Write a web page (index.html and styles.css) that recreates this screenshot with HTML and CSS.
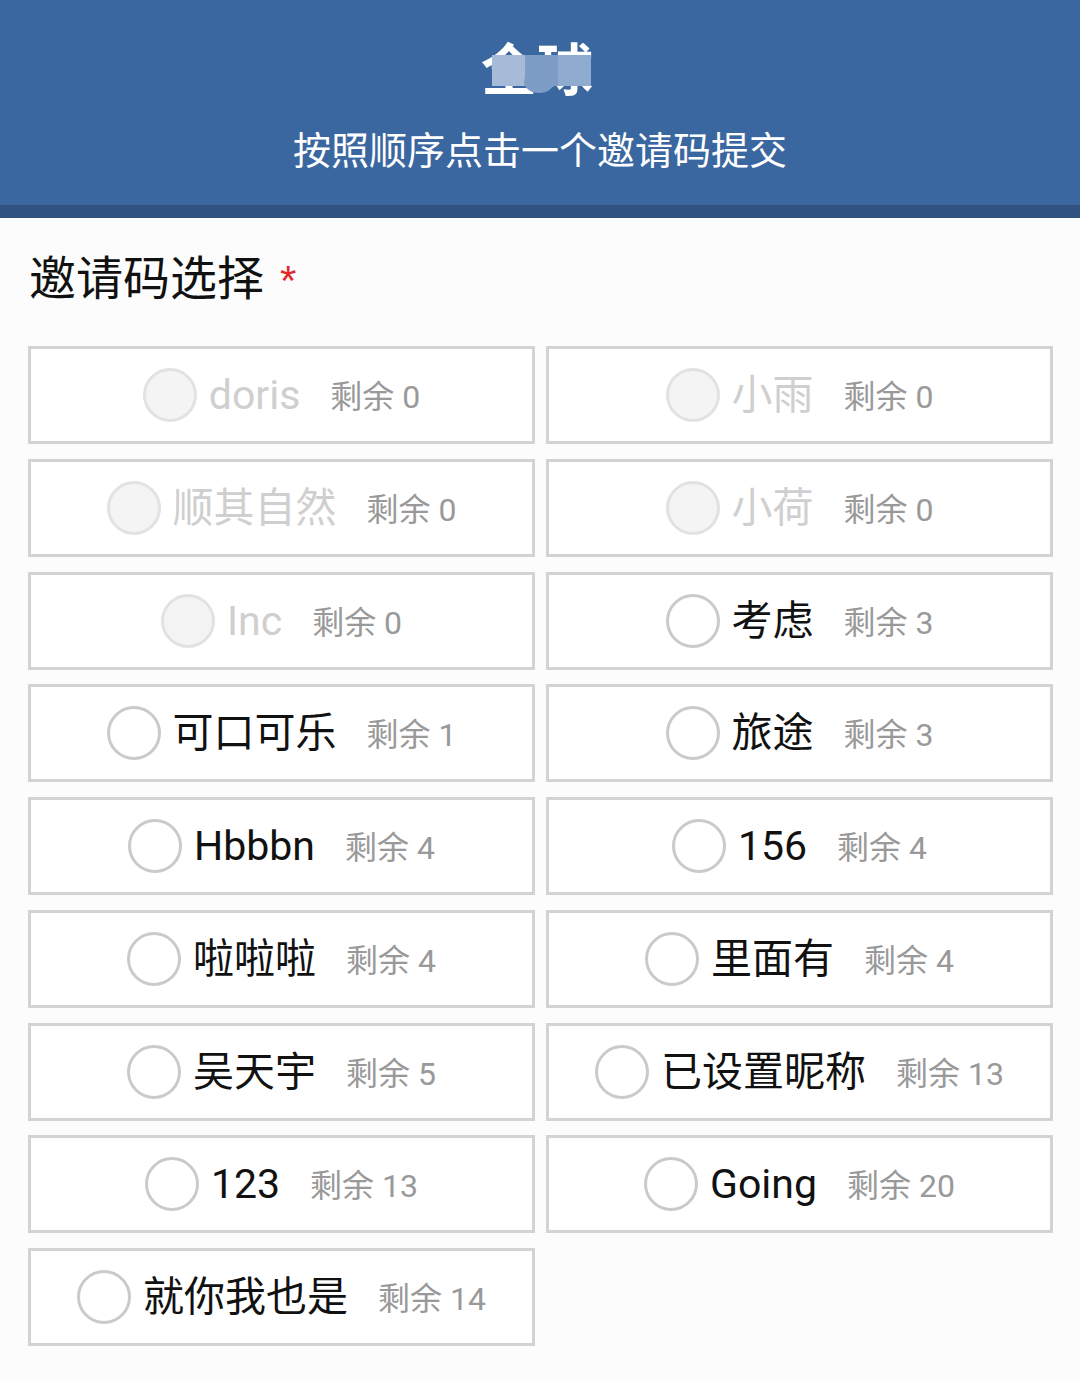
FILE: index.html
```html
<!DOCTYPE html>
<html lang="zh-CN">
<head>
<meta charset="utf-8">
<title>邀请码选择</title>
<link rel="stylesheet" href="styles.css">
</head>
<body>
<header class="header">
  <h1 class="title">全球<span class="mask"><span class="mask-a"></span><span class="mask-b"></span><span class="mask-c"></span><span class="mask-blob"></span></span></h1>
  <p class="subtitle">按照顺序点击一个邀请码提交</p>
</header>
<main class="form">
  <div class="label">邀请码选择<span class="req">*</span></div>
  <div class="grid">
    <label class="opt disabled"><span class="radio"></span><span class="name">doris</span><span class="left">剩余 0</span></label>
    <label class="opt disabled"><span class="radio"></span><span class="name">小雨</span><span class="left">剩余 0</span></label>
    <label class="opt disabled"><span class="radio"></span><span class="name">顺其自然</span><span class="left">剩余 0</span></label>
    <label class="opt disabled"><span class="radio"></span><span class="name">小荷</span><span class="left">剩余 0</span></label>
    <label class="opt disabled"><span class="radio"></span><span class="name">Inc</span><span class="left">剩余 0</span></label>
    <label class="opt"><span class="radio"></span><span class="name">考虑</span><span class="left">剩余 3</span></label>
    <label class="opt"><span class="radio"></span><span class="name">可口可乐</span><span class="left">剩余 1</span></label>
    <label class="opt"><span class="radio"></span><span class="name">旅途</span><span class="left">剩余 3</span></label>
    <label class="opt"><span class="radio"></span><span class="name">Hbbbn</span><span class="left">剩余 4</span></label>
    <label class="opt"><span class="radio"></span><span class="name">156</span><span class="left">剩余 4</span></label>
    <label class="opt"><span class="radio"></span><span class="name">啦啦啦</span><span class="left">剩余 4</span></label>
    <label class="opt"><span class="radio"></span><span class="name">里面有</span><span class="left">剩余 4</span></label>
    <label class="opt"><span class="radio"></span><span class="name">吴天宇</span><span class="left">剩余 5</span></label>
    <label class="opt"><span class="radio"></span><span class="name">已设置昵称</span><span class="left">剩余 13</span></label>
    <label class="opt"><span class="radio"></span><span class="name">123</span><span class="left">剩余 13</span></label>
    <label class="opt"><span class="radio"></span><span class="name">Going</span><span class="left">剩余 20</span></label>
    <label class="opt"><span class="radio"></span><span class="name">就你我也是</span><span class="left">剩余 14</span></label>
  </div>
</main>
</body>
</html>
```

FILE: styles.css
```css
* { box-sizing: border-box; }
html, body { margin: 0; padding: 0; }
body {
  background: #fcfcfc;
  font-family: Roboto, "Noto Sans CJK SC", sans-serif;
  color: #111;
  width: 1080px;
}
.header {
  background: #3b67a0;
  border-bottom: 13px solid #2f5283;
  text-align: center;
  color: #fff;
  padding: 34px 0 33px;
}
.title {
  margin: 0;
  font-size: 56px;
  line-height: 64px;
  font-weight: 700;
  font-family: "Noto Sans CJK SC", sans-serif;
  position: relative;
  display: inline-block;
  left: -3px;
}
.mask {
  position: absolute;
  left: 11px;
  top: 21px;
  width: 99px;
  height: 31px;
  display: flex;
}
.mask-a { flex: 33; background: #a7bbd8; }
.mask-b { flex: 33; background: #7d9cc6; }
.mask-c { flex: 33; background: #8fabd0; }
.mask-blob {
  position: absolute;
  left: 32px;
  top: 16px;
  width: 30px;
  height: 22px;
  border-radius: 50%;
  background: #7d9cc6;
}
.subtitle {
  margin: 26px 0 0;
  font-size: 38px;
  line-height: 48px;
  font-family: "Noto Sans CJK SC", sans-serif;
}
.form {
  padding: 27px 27px 0 28px;
}
.label {
  font-size: 47px;
  line-height: 60px;
  font-family: "Noto Sans CJK SC", sans-serif;
  color: #111;
  padding-left: 1px;
}
.req {
  color: #e02a2a;
  margin-left: 16px;
  font-family: "Liberation Sans", sans-serif;
  font-size: 42px;
}
.grid {
  margin-top: 35px;
  display: grid;
  grid-template-columns: 1fr 1fr;
  column-gap: 11px;
  row-gap: 14.75px;
}
.opt {
  height: 98px;
  border: 3px solid #d3d3d3;
  background: #fff;
  display: flex;
  align-items: center;
  justify-content: center;
}
.radio {
  width: 54px;
  height: 54px;
  border-radius: 50%;
  border: 3px solid #cacaca;
  background: #fff;
  flex: none;
  margin-right: 12px;
}
.name {
  font-size: 41px;
  line-height: 50px;
  color: #111;
  margin-right: 30px;
}
.left {
  font-size: 32px;
  line-height: 40px;
  color: #999;
  margin-top: 4px;
}
.disabled .radio {
  background: #f4f4f4;
  border-color: #e2e2e2;
}
.disabled .name { color: #cfcfcf; }
```
